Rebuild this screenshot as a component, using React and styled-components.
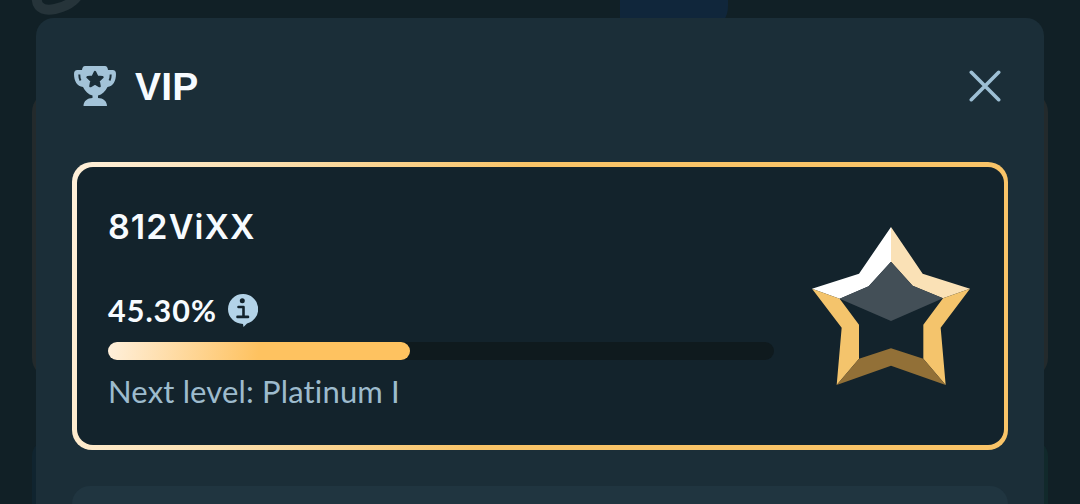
import React from 'react';
import styled, { createGlobalStyle } from 'styled-components';

const GlobalStyle = createGlobalStyle`
  * {
    box-sizing: border-box;
  }
  body {
    margin: 0;
    background: #112026;
    overflow: hidden;
  }
`;

const Page = styled.div`
  position: relative;
  height: 504px;
  padding: 18px 36px 0;
  overflow: hidden;
  font-family: Lato, 'Open Sans', sans-serif;
`;

/* dimmed page behind the modal */
const Backdrop = styled.svg`
  position: absolute;
  top: 0;
  left: 0;
`;

const Modal = styled.section`
  position: relative;
  height: 486px;
  padding: 0 36px;
  border-radius: 18px 18px 0 0;
  background: #1b2e38;
  overflow: hidden;
`;

const Header = styled.header`
  display: flex;
  align-items: center;
  height: 144px;
  padding: 0 7px 8px 2px;
`;

const Title = styled.h1`
  flex: 1;
  margin: 2px 0 0 19px;
  color: #f7fbff;
  font: 700 39px/44px 'Liberation Sans', sans-serif;
  letter-spacing: 0.2px;
`;

const CloseButton = styled.button`
  display: flex;
  padding: 0;
  border: 0;
  background: none;
  cursor: pointer;
`;

const Card = styled.div`
  height: 288px;
  padding: 5px 4px 5px 5px;
  border-radius: 20px;
  background: linear-gradient(100deg, #fff0da 0%, #fbdfae 20%, #f9c468 46%, #f9c468 100%);
`;

const CardBody = styled.div`
  display: flex;
  justify-content: space-between;
  height: 100%;
  padding: 0 34px 0 31px;
  border-radius: 16px;
  background: #13232c;
`;

const Details = styled.div`
  width: 666px;
  padding-top: 38px;
`;

const Name = styled.p`
  margin: 0 0 43px;
  color: #f7fbff;
  font: 600 34px/44px Inter, sans-serif;
  letter-spacing: ${(props) => props.spacing};
`;

const Percent = styled.div`
  display: flex;
  align-items: center;
  gap: 11px;
  height: 36px;
  color: #f7fbff;
  font: 700 30.5px/36px Lato, sans-serif;
  letter-spacing: 1px;
`;

const Track = styled.div`
  height: 18px;
  margin-top: 14px;
  border-radius: 9px;
  background: #0f1a1e;
`;

const Fill = styled.div`
  height: 100%;
  border-radius: 9px;
  background: linear-gradient(100deg, #fff0dc, #fec260 50%);
`;

const NextLevel = styled.p`
  margin: 11px 0 0;
  color: #9dbbcd;
  font-size: 31px;
  line-height: 40px;
  letter-spacing: 0.16px;
  font-variant-ligatures: none;
  white-space: nowrap;
`;

const StarBox = styled.div`
  padding-top: 60px;
`;

const NextCard = styled.div`
  height: 60px;
  margin-top: 36px;
  border-radius: 18px;
  background: #203540;
`;

const Trophy = () => (
  <svg width="42" height="40" viewBox="0 0 42 40">
    <path
      fill="#a3c3d8"
      d="M11 0h20q2.500 0 3 4h4.500q3.500 0 3.500 4c0 7-3 12.500-8.500 13-2 4.500-5.500 7.500-9.500 8.500v2.500c5 0 9 3 9 8H9.500c0-5 4-8 9-8v-2.500c-4-1-7.500-4-9.500-8.500C3 20.500 0 15 0 8q0-4 3.500-4H8q.500-4 3-4Z"
    />
    <path d="M5.300 8.500c0 2.500.400 4.500 1.200 6M36.700 8.500c0 2.500-.400 4.500-1.200 6" fill="none" stroke="#1b2e38" strokeWidth="2" />
    <path
      fill="#1b2e38"
      stroke="#1b2e38"
      strokeWidth="2.400"
      strokeLinejoin="round"
      d="m21 6 2.200 4.600 5.300.6-3.900 3.600 1 5.300-4.600-2.700-4.600 2.700 1-5.300-3.900-3.600 5.300-.6Z"
    />
  </svg>
);

const Close = () => (
  <svg width="32" height="32" viewBox="0 0 32 32">
    <path d="M2.300 2.300l27.400 27.400M29.700 2.300L2.300 29.700" stroke="#9dbfd4" strokeWidth="3.600" strokeLinecap="round" />
  </svg>
);

const Info = () => (
  <svg width="30" height="33" viewBox="0 0 30 33">
    <path fill="#b3d3e8" d="M15 0a15 15 0 0 1 4 29.500L15.500 33 15 30A15 15 0 0 1 15 0Z" />
    <circle cx="14.300" cy="6.800" r="2.500" fill="#13232c" />
    <path d="M10.500 13h5v9.700M9.500 22.900h10.500" fill="none" stroke="#13232c" strokeWidth="2.600" strokeLinecap="round" strokeLinejoin="round" />
  </svg>
);

const Star = () => (
  <svg width="158" height="158" viewBox="36 36 474 474">
    <path fill="#fff" d="M273 36 177 176 36 221 119 251 206 214 273 140Z" />
    <path fill="#fae1b6" d="M273 36 368 176 510 221 429 250 338 212 273 140Z" />
    <path fill="#f4c46c" d="M36 221 119 251 177 329V431L110 510 125 338Z" />
    <path fill="#f4c46c" d="M510 221 429 250 370 329V431L437 510 422 338Z" />
    <path fill="#927037" d="M110 510 177 431 273 400 370 431 437 510 273 452Z" />
    <path fill="#434f57" d="M273 140 338 212 429 250 273 318 119 251 206 214Z" />
  </svg>
);

const App = () => {
  const progress = 45.3;

  return (
    <>
      <GlobalStyle />
      <Page>
        <Backdrop width="1080" height="504">
          <path d="M38-10C34 4 39 12 55 9C70 6 80-3 80-12" fill="none" stroke="#26343a" strokeWidth="10" />
          <path d="M620 0h108v6q0 8-4 14H620Z" fill="#10263b" />
          <rect x="32" y="92" width="1016" height="286" rx="20" fill="#232a2c" />
          <rect x="32" y="440" width="500" height="100" rx="16" fill="#10242f" />
          <rect x="548" y="440" width="500" height="100" rx="16" fill="#11292b" />
        </Backdrop>
        <Modal>
          <Header>
            <Trophy />
            <Title>VIP</Title>
            <CloseButton aria-label="Close">
              <Close />
            </CloseButton>
          </Header>
          <Card>
            <CardBody>
              <Details>
                <Name spacing="1.1px">812ViXX</Name>
                <Percent>
                  <span>45.30%</span>
                  <Info />
                </Percent>
                <Track>
                  <Fill style={{ width: `${progress}%` }} />
                </Track>
                <NextLevel>Next level: Platinum I</NextLevel>
              </Details>
              <StarBox>
                <Star />
              </StarBox>
            </CardBody>
          </Card>
          <NextCard />
        </Modal>
      </Page>
    </>
  );
};

export default App;
